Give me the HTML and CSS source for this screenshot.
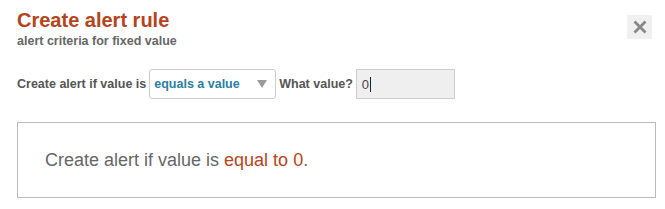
FILE: index.html
```html
<!DOCTYPE html>
<html lang="en">
<head>
<meta charset="UTF-8" />
<title>Create alert rule</title>
<link rel="stylesheet" href="styles.css">
</head>
<body>
<div class="dialog">
  <div class="header">
    <div>
      <h1 class="title">Create alert rule</h1>
      <div class="subtitle">alert criteria for fixed value</div>
    </div>
    <button class="close" aria-label="Close">
      <svg width="14" height="14" viewBox="0 0 14 14"><path d="M1.5 1.5 L12.5 12.5 M12.5 1.5 L1.5 12.5" stroke="#888" stroke-width="2.8" fill="none"/></svg>
    </button>
  </div>

  <div class="criteria">
    <span class="label">Create alert if value is</span>
    <div class="select">
      <span>equals a value</span>
      <span class="arrow"></span>
    </div>
    <span class="label">What value?</span>
    <div class="input">0<span class="caret"></span></div>
  </div>

  <div class="summary">
    <span>Create alert if value is <span class="hl">equal to 0</span>.</span>
  </div>
</div>
</body>
</html>
```

FILE: styles.css
```css
* {
  box-sizing: border-box;
}

body {
  margin: 0;
  background: #fff;
  font-family: "Liberation Sans", Arial, sans-serif;
  color: #666;
}

.dialog {
  padding: 8px 9px 0 17px;
}

.header {
  display: flex;
  justify-content: space-between;
  align-items: flex-start;
}

.title {
  margin: 0;
  font-size: 20px;
  line-height: 25px;
  font-weight: bold;
  color: #b5441d;
}

.subtitle {
  margin-top: 2px;
  font-size: 12.5px;
  line-height: 13px;
  font-weight: bold;
  color: #666;
}

.close {
  margin: 7px 4px 0 0;
  width: 25px;
  height: 24px;
  padding: 0;
  border: none;
  background: #f0f0f0;
  display: flex;
  align-items: center;
  justify-content: center;
}

.criteria {
  display: flex;
  align-items: center;
  gap: 3px;
  margin-top: 21px;
}

.label {
  font-size: 12.5px;
  font-weight: bold;
  color: #555;
}

.select {
  width: 127px;
  height: 30px;
  border: 1px solid #ccc;
  border-radius: 3px;
  background: #fff;
  display: flex;
  align-items: center;
  justify-content: space-between;
  padding: 0 8px 0 4px;
  font-size: 12.5px;
  font-weight: bold;
  color: #2b7fa3;
}

.arrow {
  width: 0;
  height: 0;
  border-left: 5px solid transparent;
  border-right: 5px solid transparent;
  border-top: 8px solid #9a9a9a;
}

.input {
  width: 99px;
  height: 30px;
  border: 1px solid #ccc;
  background: #efefef;
  display: flex;
  align-items: center;
  padding-left: 5px;
  font-size: 13px;
  color: #444;
}

.caret {
  display: inline-block;
  width: 1px;
  height: 15px;
  background: #222;
  margin-left: 1px;
}

.summary {
  margin-top: 23px;
  height: 76px;
  border: 1px solid #bbb;
  display: flex;
  align-items: center;
  padding-left: 27px;
  font-size: 18px;
  color: #666;
}

.hl {
  color: #b5441d;
}
```
